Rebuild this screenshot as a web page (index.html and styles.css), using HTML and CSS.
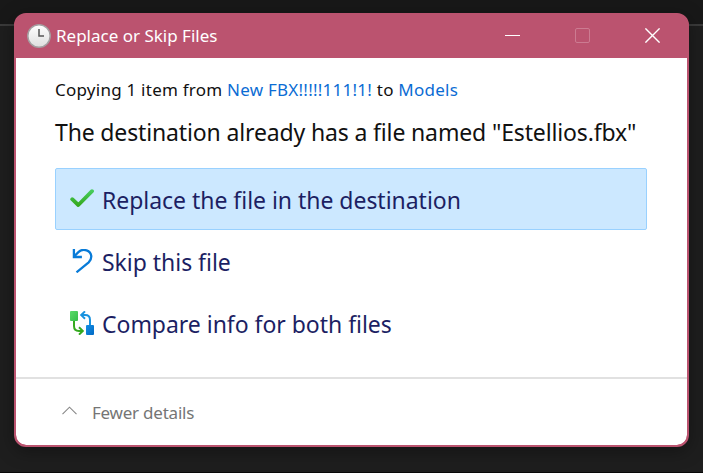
FILE: index.html
```html
<!DOCTYPE html>
<html lang="en">
<head>
<meta charset="utf-8">
<title>Replace or Skip Files</title>
<link rel="stylesheet" href="styles.css">
</head>
<body>
<section class="dialog">
  <header class="titlebar">
    <svg class="clock" width="24" height="24" viewBox="0 0 24 24">
      <defs><linearGradient id="face" x1="0" y1="0" x2="0" y2="1"><stop offset="0" stop-color="#fff"/><stop offset="1" stop-color="#dedede"/></linearGradient></defs>
      <circle cx="12" cy="12" r="11.2" fill="url(#face)" stroke="#a49fa1" stroke-width="1.5"/>
      <path d="M12 5v7H17" fill="none" stroke="#555" stroke-width="1.5"/>
    </svg>
    <h1 class="title">Replace or Skip Files</h1>
    <div class="controls">
      <svg width="15" height="15" viewBox="0 0 15 15"><path d="M0 7.5h15" stroke="#fff"/></svg>
      <svg width="15" height="15" viewBox="0 0 15 15"><rect x=".5" y=".5" width="14" height="14" rx="1.5" fill="none" stroke="#cc7b91"/></svg>
      <svg width="15" height="15" viewBox="0 0 15 15"><path d="M.4.4l14.2 14.2M14.6.4L.4 14.6" stroke="#fff" stroke-width="1.4"/></svg>
    </div>
  </header>
  <main class="content">
    <p class="summary">Copying 1 item from <a>New FBX!!!!!111!1!</a> to <a>Models</a></p>
    <h2 class="heading">The destination already has a file named "Estellios.fbx"</h2>
    <div class="option selected">
      <svg width="24" height="24" viewBox="0 0 24 24">
        <defs><linearGradient id="check" x1="0" y1="0" x2="0" y2="1"><stop offset="0" stop-color="#46cb5b"/><stop offset="1" stop-color="#35a91f"/></linearGradient></defs>
        <path d="M2.2 12.2l6.1 5.8L22 4.2" fill="none" stroke="url(#check)" stroke-width="3.8" stroke-linecap="round" stroke-linejoin="round"/>
      </svg>
      <span class="replace">Replace the file in the destination</span>
    </div>
    <div class="option">
      <svg width="24" height="24" viewBox="0 0 24 24">
        <path d="M3.9 0v8h8M4 7.5L8.4 3.1C13.4-1.3 21 1.4 21.3 7.6c0 2.4-1 4.2-2.6 5.7L6.5 23.3" fill="none" stroke="#087bd8" stroke-width="2.3"/>
      </svg>
      <span class="skip">Skip this file</span>
    </div>
    <div class="option">
      <svg width="24" height="24" viewBox="0 0 24 24">
        <defs>
          <linearGradient id="leaf" x1="0" y1="0" x2="1" y2="1"><stop offset="0" stop-color="#5bdb6a"/><stop offset="1" stop-color="#36bd49"/></linearGradient>
          <linearGradient id="water" x1="0" y1="0" x2="1" y2="1"><stop offset="0" stop-color="#168fe4"/><stop offset="1" stop-color="#0069c5"/></linearGradient>
        </defs>
        <path d="M4 9v6c0 3.2 1.5 4.9 5 4.9h3.5M9 16.2l3.8 3.7L9 23.6" fill="none" stroke="#35a91f" stroke-width="2"/>
        <path d="M20 15V9c0-3.4-1.5-4.9-5-4.9h-3.5M15 .4l-3.8 3.7L15 7.8" fill="none" stroke="#1892df" stroke-width="2"/>
        <rect x="0" y="0" width="8" height="10" rx="1" fill="url(#leaf)"/>
        <rect x="16" y="14" width="8" height="10" rx="1" fill="url(#water)"/>
      </svg>
      <span class="compare">Compare info for both files</span>
    </div>
  </main>
  <footer class="footer">
    <svg width="15" height="9" viewBox="0 0 15 9"><path d="M.5 8.2l7-7 7 7" fill="none" stroke="#888" stroke-width="1.1"/></svg>
    <span>Fewer details</span>
  </footer>
</section>
</body>
</html>
```
FILE: styles.css
```css
* { box-sizing: border-box; }
body {
  margin: 0;
  height: 473px;
  padding: 13px 14px 0;
  overflow: hidden;
  font-family: "Noto Sans", "Open Sans", sans-serif;
  background: linear-gradient(#181818 0 24px, #3a3a3a 24px 26px, #1e1e1e 26px 472px, #080808 472px);
}
.dialog {
  width: 675px;
  height: 434px;
  display: flex;
  flex-direction: column;
  border: 2px solid #bb536f;
  border-radius: 12px;
  background: #bb536f;
  overflow: hidden;
  box-shadow: 0 4px 18px rgba(0, 0, 0, .35);
}
.titlebar {
  height: 43px;
  flex: none;
  display: flex;
  align-items: center;
  padding: 0 27px 2px 11px;
  color: #fff;
}
.clock { margin-right: 5px; }
.title { margin: 0; font-size: 17px; font-weight: 400; letter-spacing: 0; white-space: nowrap; }
.controls { margin-left: auto; display: flex; gap: 55px; }
svg { display: block; flex: none; }
.content { height: 319px; padding: 19px 40px 0 39px; flex: none; background: #fff; }
.summary { margin: 0; font-size: 17px; line-height: 25px; letter-spacing: .24px; color: #111; white-space: nowrap; }
.summary a { color: #0b6cd4; }
.heading { margin: 14px 0 19px; font-size: 23px; line-height: 33px; font-weight: 400; letter-spacing: -.145px; white-space: nowrap; color: #111; }
.option {
  height: 62px;
  display: flex;
  align-items: center;
  gap: 8px;
  padding: 2px 0 0 14px;
  border: 1px solid transparent;
  border-radius: 2px;
  color: #1c1f63;
  font-size: 23px;
  letter-spacing: -.03px;
  white-space: nowrap;
}
.option svg { margin-top: -3px; }
.selected { background: #cce8ff; border-color: #99d1ff; }
.footer {
  flex: 1;
  display: flex;
  align-items: center;
  gap: 15px;
  padding: 0 0 0 46px;
  border-top: 2px solid #e1e1e1;
  border-radius: 0 0 10px 10px;
  background: #fff;
  color: #757575;
  font-size: 17px;
  letter-spacing: -.23px;
}
.footer svg { margin-top: -4px; }
```
